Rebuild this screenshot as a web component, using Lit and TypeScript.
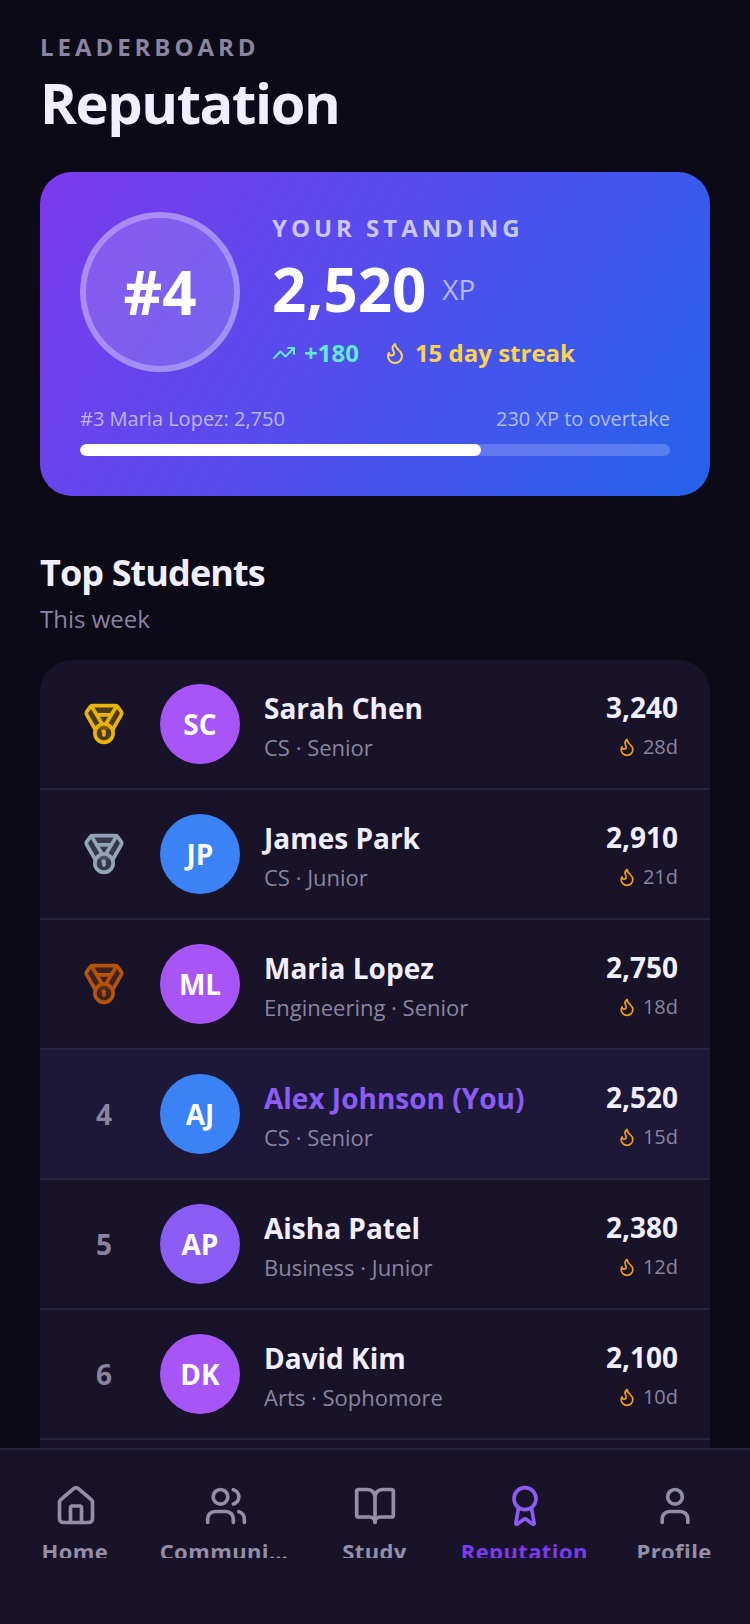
import { LitElement, html, css, svg } from "lit";
import { customElement } from "lit/decorators.js";

const flame = svg`<path d="M8.5 14.5A2.5 2.5 0 0 0 11 12c0-1.38-.5-2-1-3-1.072-2.143-.224-4.054 2-6 .5 2.5 2 4.9 4 6.5 2 1.6 3 3.5 3 5.5a7 7 0 1 1-14 0c0-1.153.433-2.294 1-3a2.5 2.5 0 0 0 2.5 2.5z"/>`;
const trending = svg`<polyline points="22 7 13.5 15.5 8.5 10.5 2 17"/><polyline points="16 7 22 7 22 13"/>`;
const medal = svg`<path d="M7.21 15 2.66 7.14a2 2 0 0 1 .13-2.2L4.4 2.8A2 2 0 0 1 6 2h12a2 2 0 0 1 1.6.8l1.6 2.14a2 2 0 0 1 .14 2.2L16.79 15"/><path d="M11 12 5.12 2.2"/><path d="m13 12 5.88-9.8"/><path d="M8 7h8"/><circle cx="12" cy="17" r="5"/><path d="M12 18v-2h-.5"/>`;
const navIcons = {
  home: svg`<path d="M15 21v-8a1 1 0 0 0-1-1h-4a1 1 0 0 0-1 1v8"/><path d="M3 10a2 2 0 0 1 .709-1.528l7-5.999a2 2 0 0 1 2.582 0l7 5.999A2 2 0 0 1 21 10v9a2 2 0 0 1-2 2H5a2 2 0 0 1-2-2z"/>`,
  users: svg`<path d="M16 21v-2a4 4 0 0 0-4-4H6a4 4 0 0 0-4 4v2"/><circle cx="9" cy="7" r="4"/><path d="M22 21v-2a4 4 0 0 0-3-3.87"/><path d="M16 3.13a4 4 0 0 1 0 7.75"/>`,
  book: svg`<path d="M12 7v14"/><path d="M3 18a1 1 0 0 1-1-1V4a1 1 0 0 1 1-1h5a4 4 0 0 1 4 4 4 4 0 0 1 4-4h5a1 1 0 0 1 1 1v13a1 1 0 0 1-1 1h-6a3 3 0 0 0-3 3 3 3 0 0 0-3-3z"/>`,
  award: svg`<path d="m15.477 12.89 1.515 8.526a.5.5 0 0 1-.81.47l-3.58-2.687a1 1 0 0 0-1.197 0l-3.586 2.686a.5.5 0 0 1-.81-.469l1.514-8.526"/><circle cx="12" cy="8" r="6"/>`,
  user: svg`<path d="M19 21v-2a4 4 0 0 0-4-4H9a4 4 0 0 0-4 4v2"/><circle cx="12" cy="7" r="4"/>`,
};

const PURPLE = "#a855f7";
const BLUE = "#3b82f6";
const VIOLET = "#8b5cf6";
const students = [
  { rank: 1, ini: "SC", name: "Sarah Chen", sub: "CS · Senior", xp: "3,240", d: "28d", c: PURPLE },
  { rank: 2, ini: "JP", name: "James Park", sub: "CS · Junior", xp: "2,910", d: "21d", c: BLUE },
  { rank: 3, ini: "ML", name: "Maria Lopez", sub: "Engineering · Senior", xp: "2,750", d: "18d", c: PURPLE },
  { rank: 4, ini: "AJ", name: "Alex Johnson (You)", sub: "CS · Senior", xp: "2,520", d: "15d", c: BLUE, me: true },
  { rank: 5, ini: "AP", name: "Aisha Patel", sub: "Business · Junior", xp: "2,380", d: "12d", c: VIOLET },
  { rank: 6, ini: "DK", name: "David Kim", sub: "Arts · Sophomore", xp: "2,100", d: "10d", c: PURPLE },
];
const medalColors = ["#eab308", "#94a3b8", "#b45309"];
const tabs = [
  { k: "home", l: "Home" },
  { k: "users", l: "Community" },
  { k: "book", l: "Study" },
  { k: "award", l: "Reputation", on: true },
  { k: "user", l: "Profile" },
] as const;

@customElement("app-root")
export class AppRoot extends LitElement {
  static styles = css`
    :host {
      display: flex;
      flex-direction: column;
      width: 750px;
      height: 1624px;
      overflow: hidden;
      background: #0c0a16;
      font-family: "Open Sans", "Noto Sans", sans-serif;
      color: #fff;
    }
    svg { fill: none; stroke: currentColor; stroke-width: 2; stroke-linecap: round; stroke-linejoin: round; display: block; flex: none; }
    main { flex: 1; min-height: 0; overflow: hidden; padding: 31px 40px 0; }
    .eyebrow { font-size: 24px; line-height: 32px; font-weight: 700; letter-spacing: 3.96px; color: #8a84a0; }
    h1 { margin: 1px 0 0; font-size: 56px; line-height: 76px; font-weight: 700; letter-spacing: -1.4px; color: #f1eeff; }
    .hero {
      margin-top: 32px;
      border-radius: 32px;
      padding: 40px;
      background: linear-gradient(122deg, #7c3aed, #2563eb);
    }
    .top { display: flex; align-items: center; gap: 32px; }
    .badge {
      width: 160px; height: 160px; box-sizing: border-box; border-radius: 50%;
      border: 6px solid rgba(255,255,255,.3); background: rgba(255,255,255,.15);
      display: flex; align-items: center; justify-content: center;
      font-size: 60px; font-weight: 700;
    }
    .info { padding-bottom: 3px; }
    .label { font-size: 24px; line-height: 30px; font-weight: 700; letter-spacing: 3.96px; color: rgba(255,255,255,.7); }
    .xp { display: flex; align-items: center; gap: 16px; font-size: 60px; line-height: 72px; font-weight: 700; margin-top: 10px; }
    .xp span { font-size: 28px; font-weight: 400; color: rgba(255,255,255,.6); }
    .stats { display: flex; align-items: center; gap: 24px; margin-top: 12px; font-size: 24px; line-height: 32px; font-weight: 700; }
    .stat { display: flex; align-items: center; gap: 8px; }
    .up { color: #5eead4; }
    .fire { color: #fcd34d; }
    .pl { display: flex; justify-content: space-between; margin-top: 33px; font-size: 20px; line-height: 28px; color: rgba(255,255,255,.6); }
    .track { margin-top: 11px; height: 12px; border-radius: 6px; background: rgba(255,255,255,.2); overflow: hidden; }
    .fill { height: 100%; border-radius: 6px; background: #fff; }
    h2 { margin: 53px 0 0; font-size: 36px; line-height: 48px; font-weight: 700; letter-spacing: -.9px; color: #f1eeff; }
    .week { font-size: 24px; line-height: 32px; color: #8a84a0; margin-top: 6px; }
    .list { margin-top: 25px; padding-bottom: 40px; background: #181329; border-radius: 32px 32px 0 0; }
    .row { height: 130px; box-sizing: border-box; display: flex; align-items: center; gap: 24px; padding: 0 32px; border-bottom: 2px solid #28233d; }
    .row.me { background: #1d1738; }
    .rank { width: 64px; flex: none; display: flex; justify-content: center; font-size: 28px; font-weight: 700; color: #8a84a0; }
    .av { width: 80px; height: 80px; flex: none; border-radius: 50%; display: flex; align-items: center; justify-content: center; font-size: 28px; font-weight: 700; }
    .who { flex: 1; min-width: 0; padding-top: 3px; }
    .name { font-size: 28px; line-height: 38px; font-weight: 700; color: #f1eeff; }
    .me .name { color: #8b5cf6; }
    .sub { font-size: 22px; line-height: 30px; margin-top: 5px; color: #8a84a0; }
    .sc { display: flex; flex-direction: column; align-items: flex-end; }
    .num { font-size: 28px; line-height: 38px; font-weight: 700; color: #f1eeff; }
    .d { display: flex; align-items: center; gap: 6px; margin-top: 7px; font-size: 20px; line-height: 28px; color: #8a84a0; }
    .d svg { color: #f59e0b; }
    nav { flex: none; height: 176px; box-sizing: border-box; border-top: 2px solid #28233d; background: #181329; display: flex; padding: 34px 0 0 1px; }
    .tab { flex: 1; min-width: 0; display: flex; flex-direction: column; align-items: center; color: #948ea8; }
    .tab.on { color: #8b5cf6; }
    .tab.on .tl { color: #7c3aed; }
    .tl { width: 130px; height: 22px; margin: 8px 2px 0 0; font-size: 22px; line-height: 30px; font-weight: 700; letter-spacing: .4px; text-align: center; overflow: hidden; white-space: nowrap; text-overflow: ellipsis; }
  `;

  render() {
    return html`
      <main>
        <div class="eyebrow">LEADERBOARD</div>
        <h1>Reputation</h1>
        <section class="hero">
          <div class="top">
            <div class="badge">#4</div>
            <div class="info">
              <div class="label">YOUR STANDING</div>
              <div class="xp">2,520 <span>XP</span></div>
              <div class="stats">
                <div class="stat up"><svg width="24" height="24" viewBox="0 0 24 24">${trending}</svg>+180</div>
                <div class="stat fire"><svg width="24" height="24" viewBox="0 0 24 24">${flame}</svg>15 day streak</div>
              </div>
            </div>
          </div>
          <div class="pl"><span>#3 Maria Lopez: 2,750</span><span>230 XP to overtake</span></div>
          <div class="track"><div class="fill" style="width:68%"></div></div>
        </section>
        <h2>Top Students</h2>
        <div class="week">This week</div>
        <div class="list">
          ${students.map(
            (s) => html`
              <div class="row ${s.me ? "me" : ""}">
                <div class="rank">
                  ${s.rank <= 3
                    ? html`<svg width="44" height="44" viewBox="0 0 24 24" style="color:${medalColors[s.rank - 1]};fill:${medalColors[s.rank - 1]}40">${medal}</svg>`
                    : s.rank}
                </div>
                <div class="av" style="background:${s.c}">${s.ini}</div>
                <div class="who">
                  <div class="name">${s.name}</div>
                  <div class="sub">${s.sub}</div>
                </div>
                <div class="sc">
                  <div class="num">${s.xp}</div>
                  <div class="d"><svg width="20" height="20" viewBox="0 0 24 24">${flame}</svg>${s.d}</div>
                </div>
              </div>
            `
          )}
        </div>
      </main>
      <nav>
        ${tabs.map(
          (t) => html`
            <div class="tab ${"on" in t ? "on" : ""}">
              <svg width="44" height="44" viewBox="0 0 24 24">${navIcons[t.k]}</svg>
              <div class="tl">${t.l}</div>
            </div>
          `
        )}
      </nav>
    `;
  }
}
